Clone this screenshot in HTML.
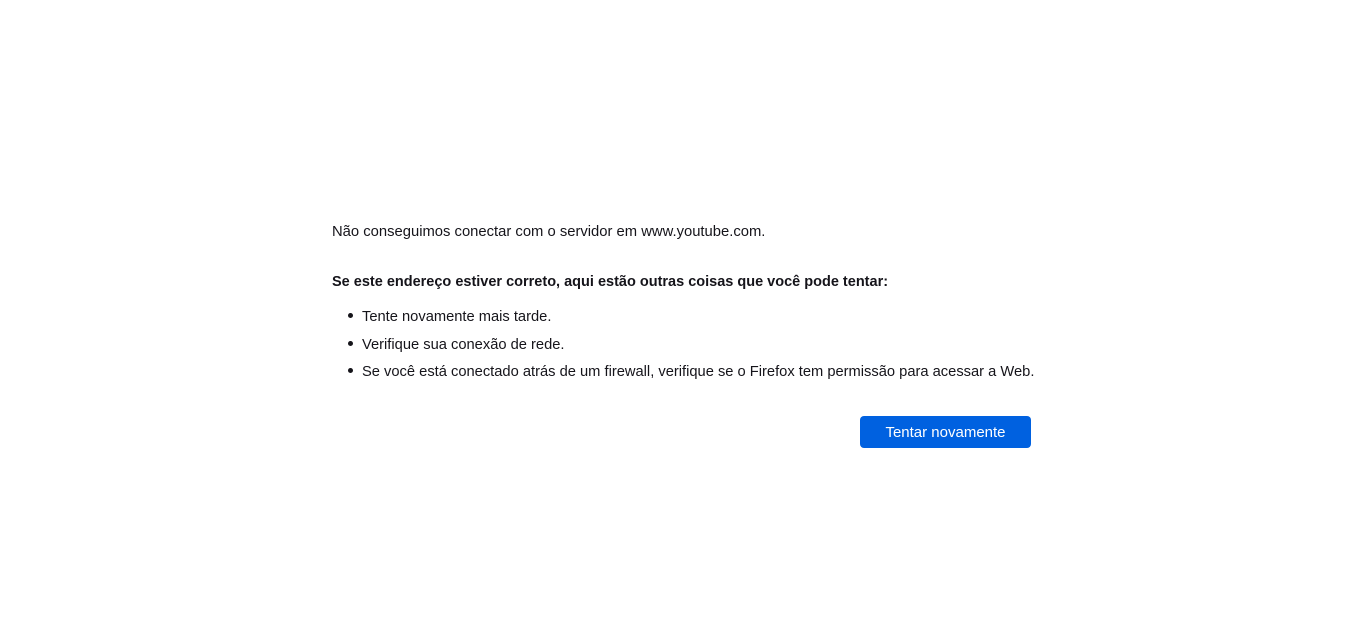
<!DOCTYPE html>
<html><head><meta charset="utf-8"><style>
body{margin:0;background:#fff;width:1366px;height:643px;font-family:"Liberation Sans",sans-serif;color:#15141a;position:relative;overflow:hidden}
.t{position:absolute;left:332px;font-size:14.8px;white-space:nowrap;line-height:18px}
.b{font-weight:bold;font-size:14.5px}
.li{position:absolute;left:362px;font-size:14.7px;white-space:nowrap;line-height:18px}
.dot{position:absolute;left:348px;width:5px;height:5px;border-radius:50%;background:#15141a}
.btn{position:absolute;left:860px;top:416px;width:171px;height:32px;background:#0061e0;border-radius:4px;color:#fff;font-size:15px;line-height:34px;text-align:center}
</style></head><body>
<div class="t" style="top:223px">Não conseguimos conectar com o servidor em www.youtube.com.</div>
<div class="t b" style="top:273px">Se este endereço estiver correto, aqui estão outras coisas que você pode tentar:</div>
<div class="dot" style="top:313px"></div><div class="li" style="top:308px">Tente novamente mais tarde.</div>
<div class="dot" style="top:341px"></div><div class="li" style="top:336px">Verifique sua conexão de rede.</div>
<div class="dot" style="top:368px"></div><div class="li" style="top:363px">Se você está conectado atrás de um firewall, verifique se o Firefox tem permissão para acessar a Web.</div>
<div class="btn">Tentar novamente</div>
</body></html>
